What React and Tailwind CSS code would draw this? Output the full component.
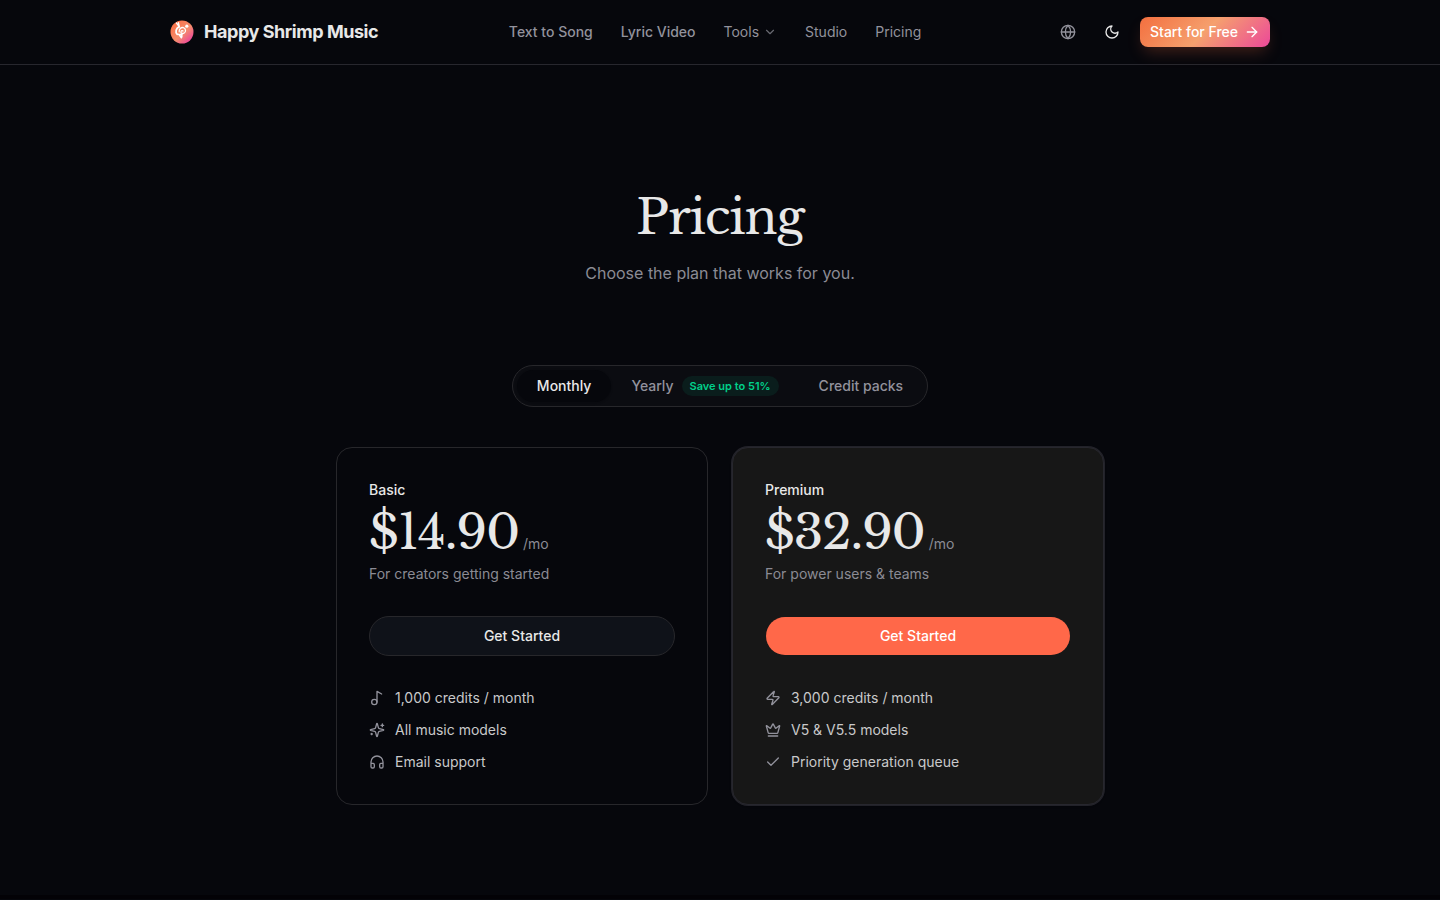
import { ArrowRight, Check, ChevronDown, Crown, Globe, Headphones, Music2, Zap } from "lucide-react";

const SERIF = "font-['Libre_Baskerville','Liberation_Serif',serif] tracking-tight";

function Logo() {
  return (
    <svg viewBox="0 0 24 24" className="size-6 shrink-0" fill="none" aria-hidden="true">
      <defs>
        <linearGradient id="logo-fill" x1="4" y1="4" x2="20" y2="21" gradientUnits="userSpaceOnUse">
          <stop offset="0" stopColor="#f9734a" />
          <stop offset="0.55" stopColor="#f58d6c" />
          <stop offset="1" stopColor="#ec4899" />
        </linearGradient>
      </defs>
      <circle cx="12" cy="12" r="11.5" fill="url(#logo-fill)" />
      <g stroke="#fff" strokeLinecap="round" strokeLinejoin="round">
        <path d="M9.4 6.8 6.4 3M9.4 6.8 8.4 2.6" strokeWidth="1.3" />
        <path d="M9.2 6.6C6 8 5 12.4 7.2 14.4" strokeWidth="1.8" />
        <path d="M9.2 11.8C8.8 9 11 7 13.4 7.6c2.6.8 2.8 4.6.6 5.6-1.6.8-3.6-.2-3-1.8.3-.9 1.5-1.1 2-.4" strokeWidth="1.3" />
        <path d="M8 14.2c1.6.6 3 .4 4.2-.2M9.4 15l2 2.8M11.8 14.6v2.4" strokeWidth="1.5" />
      </g>
      <circle cx="16.8" cy="6.2" r="1.6" fill="#fff" />
    </svg>
  );
}

function LineIcon({ className, children }) {
  return (
    <svg
      viewBox="0 0 24 24"
      className={className}
      fill="none"
      stroke="currentColor"
      strokeWidth="2"
      strokeLinecap="round"
      strokeLinejoin="round"
      aria-hidden="true"
    >
      {children}
    </svg>
  );
}

function Moon({ className }) {
  return (
    <LineIcon className={className}>
      <path d="M12 3a6 6 0 0 0 9 9 9 9 0 1 1-9-9Z" />
    </LineIcon>
  );
}

function Sparkles({ className }) {
  return (
    <LineIcon className={className}>
      <path d="M9.937 15.5A2 2 0 0 0 8.5 14.063l-6.135-1.582a.5.5 0 0 1 0-.962L8.5 9.936A2 2 0 0 0 9.937 8.5l1.582-6.135a.5.5 0 0 1 .963 0L14.063 8.5A2 2 0 0 0 15.5 9.937l6.135 1.581a.5.5 0 0 1 0 .964L15.5 14.063a2 2 0 0 0-1.437 1.437l-1.582 6.135a.5.5 0 0 1-.963 0z" />
      <path d="M20 3v4M22 5h-4M4 17v2M5 18H3" />
    </LineIcon>
  );
}

const plans = [
  {
    name: "Basic",
    price: "$14.90",
    blurb: "For creators getting started",
    features: [
      [Music2, "1,000 credits / month"],
      [Sparkles, "All music models"],
      [Headphones, "Email support"],
    ],
  },
  {
    name: "Premium",
    price: "$32.90",
    blurb: "For power users & teams",
    featured: true,
    features: [
      [Zap, "3,000 credits / month"],
      [Crown, "V5 & V5.5 models"],
      [Check, "Priority generation queue"],
    ],
  },
];

function PlanCard({ plan }) {
  return (
    <article
      className={
        plan.featured
          ? "rounded-2xl border border-[#27272e] bg-[#171717] p-8 shadow-sm ring-1 ring-[#222229]"
          : "rounded-2xl border border-[#27272b] p-8"
      }
    >
      <h2 className="text-sm leading-5 font-medium">{plan.name}</h2>
      <p className="flex items-baseline gap-1">
        <span className={`text-5xl leading-16 ${SERIF}`}>{plan.price}</span>
        <span className="text-sm text-[#8b8b94]">/mo</span>
      </p>
      <p className="text-sm leading-5 text-[#8b8b94]">{plan.blurb}</p>
      <button
        type="button"
        className={
          plan.featured
            ? "mt-8 h-10 w-full rounded-full border border-transparent bg-[#ff6849] bg-clip-padding text-sm font-medium text-white"
            : "mt-8 h-10 w-full rounded-full border border-[#27272b] bg-[#0f1219] text-sm font-medium"
        }
      >
        Get Started
      </button>
      <ul className="mt-8 flex flex-col gap-3">
        {plan.features.map(([Icon, label]) => (
          <li key={label} className="flex items-center gap-[10px] text-sm leading-5 text-[#c9c9ca]">
            <Icon className="size-4 shrink-0 text-[#92929c]" />
            {label}
          </li>
        ))}
      </ul>
    </article>
  );
}

export default function App() {
  return (
    <div className="min-h-screen bg-[#06070c] font-[Inter,sans-serif] text-[#e8e8e8]">
      <header className="border-b border-[#27272e]">
        <div className="mx-auto flex h-16 max-w-[1100px] items-center justify-between">
          <a href="#home" className="flex items-center gap-[10px] text-lg font-bold tracking-tight">
            <Logo />
            Happy Shrimp Music
          </a>
          <nav className="flex items-center gap-7 text-sm text-[#92929c]">
            <a href="#song" className="font-medium">Text to Song</a>
            <a href="#video" className="font-medium">Lyric Video</a>
            <button type="button" className="flex items-center gap-1">
              Tools
              <ChevronDown className="size-[14px] opacity-70" aria-hidden="true" />
            </button>
            <a href="#studio">Studio</a>
            <a href="#pricing">Pricing</a>
          </nav>
          <div className="flex items-center gap-3">
            <button type="button" aria-label="Language" className="grid size-8 place-items-center text-[#92929c]">
              <Globe className="size-4" />
            </button>
            <button type="button" aria-label="Theme" className="grid size-8 place-items-center">
              <Moon className="size-4" />
            </button>
            <a
              href="#start"
              className="flex h-[30px] items-center gap-1.5 rounded-lg bg-[linear-gradient(135deg,#f36f3f,#f5a06e_50%,#ec4899)] px-[10px] text-sm font-medium text-white shadow-[0_8px_16px_-4px_rgba(255,112,67,0.25)]"
            >
              Start for Free
              <ArrowRight className="size-4" aria-hidden="true" />
            </a>
          </div>
        </div>
      </header>

      <main className="mx-auto max-w-[768px] pt-[120px] pb-[90px]">
        <div className="text-center">
          <h1 className={`text-5xl leading-16 ${SERIF}`}>Pricing</h1>
          <p className="mt-3 text-base leading-6 text-[#8b8b94]">Choose the plan that works for you.</p>
        </div>

        <div className="mt-20 flex justify-center">
          <div className="flex h-[42px] items-center rounded-full border border-[#27272b] bg-[#0b0c11] p-1 text-sm font-medium text-[#92929c]">
            <button type="button" className="h-8 rounded-full bg-[#06070c] px-5 text-[#e8e8e8] shadow-sm">Monthly</button>
            <button type="button" className="flex h-8 items-center gap-2 px-5">
              Yearly
              <span className="rounded-full bg-[#0a1d1c] px-2 py-0.5 text-[11px] leading-4 font-semibold text-[#00d08a]">Save up to 51%</span>
            </button>
            <button type="button" className="h-8 px-5">Credit packs</button>
          </div>
        </div>

        <div className="mt-10 grid gap-6 md:grid-cols-2">
          {plans.map((plan) => (
            <PlanCard key={plan.name} plan={plan} />
          ))}
        </div>
      </main>
      <footer className="h-1 bg-[#030206]" />
    </div>
  );
}
